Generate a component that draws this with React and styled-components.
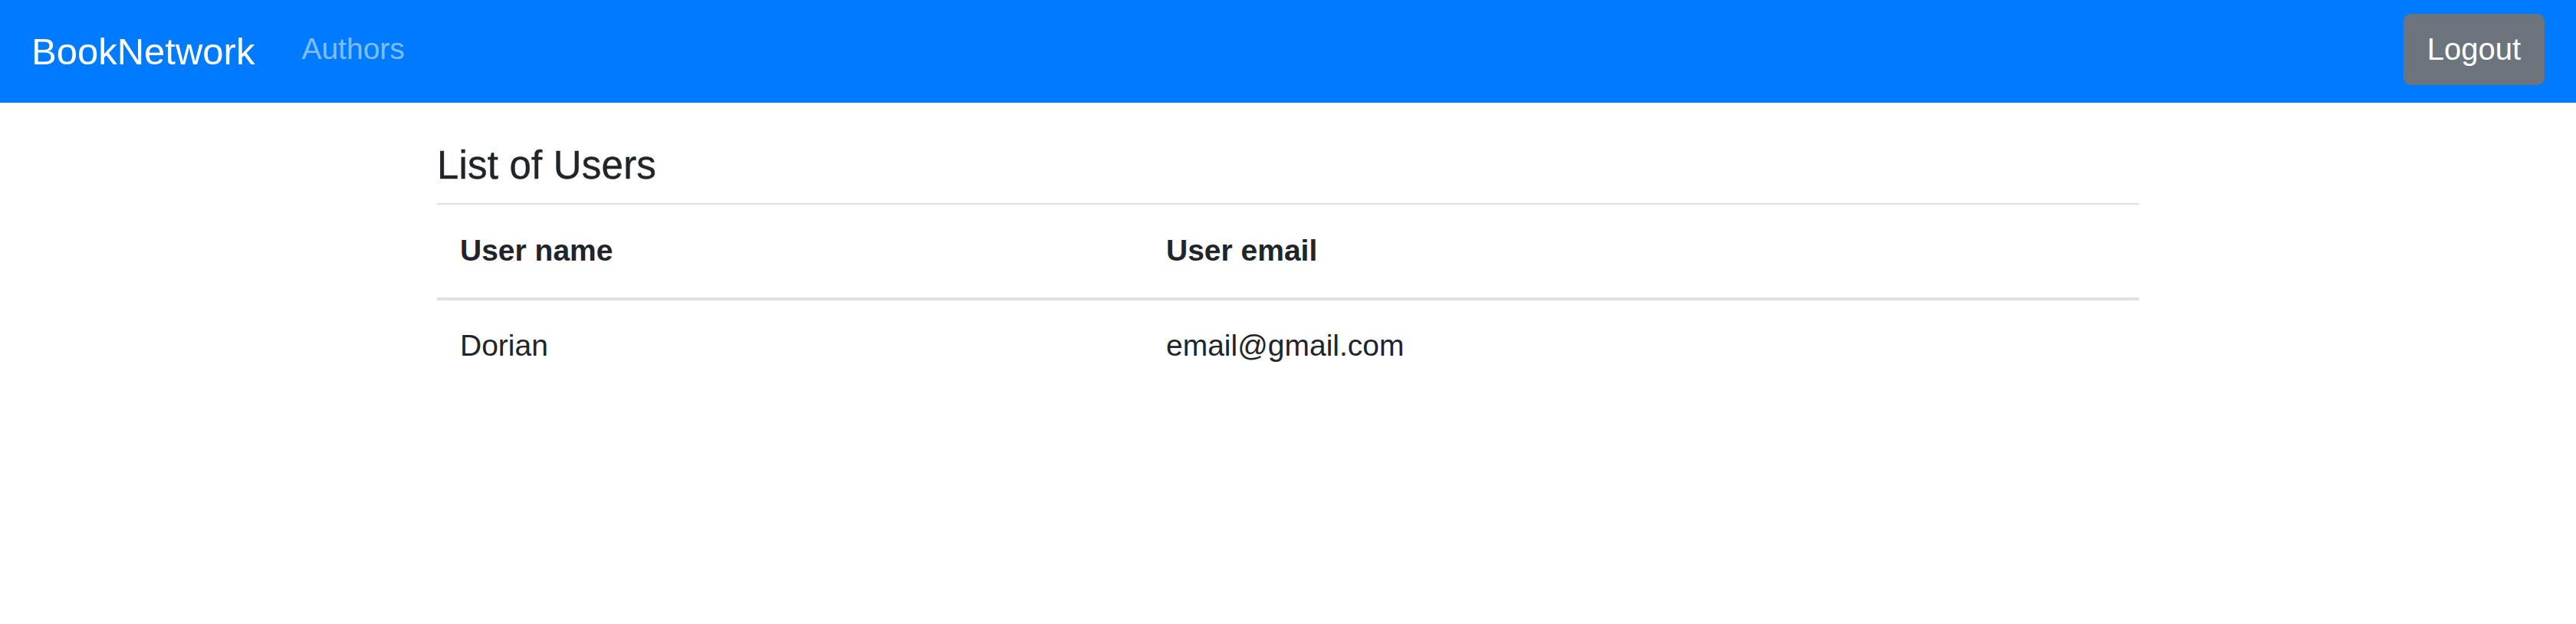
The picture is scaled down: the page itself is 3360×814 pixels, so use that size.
import React from "react"
import styled, { createGlobalStyle } from "styled-components"

const GlobalStyle = createGlobalStyle`
  html, body {
    margin: 0;
    padding: 0;
    background: #fff;
  }

  body {
    font-family: "Liberation Sans", Arial, sans-serif;
    color: #212529;
  }
`

const Navbar = styled.nav`
  display: flex;
  align-items: center;
  height: 134px;
  padding: 0 41px 0 41px;
  background: #007bff;
  box-sizing: border-box;
`

const Brand = styled.a`
  font-size: 49px;
  line-height: 1.2;
  color: #fff;
  text-decoration: none;
  margin-right: 61px;
`

const NavItem = styled.a`
  font-size: 39px;
  line-height: 1.2;
  color: rgba(255, 255, 255, 0.5);
  text-decoration: none;
  margin-bottom: 6px;
`

const Spacer = styled.div`
  flex: 1;
`

const LogoutButton = styled.button`
  height: 93px;
  padding: 0 31px;
  margin-bottom: 5px;
  border: none;
  border-radius: 10px;
  background: #6c757d;
  color: #fff;
  font-family: inherit;
  font-size: 40px;
  cursor: pointer;
`

const Container = styled.main`
  width: 2220px;
  margin: 51px auto 0;
`

const Title = styled.h4`
  margin: 0 0 19px;
  font-size: 51px;
  font-weight: 500;
  line-height: 1.2;
  letter-spacing: 0.2px;
  -webkit-text-stroke: 0.4px #212529;
`

const Table = styled.table`
  width: 100%;
  border-collapse: collapse;
  font-size: 39px;
  line-height: 1.5;
`

const HeadCell = styled.th`
  width: ${props => props.width || "auto"};
  padding: 31px 30px;
  text-align: left;
  font-weight: 700;
  border-top: 2px solid #dee2e6;
  border-bottom: 4px solid #dee2e6;
`

const Cell = styled.td`
  padding: 30px 30px;
`

const users = [{ name: "Dorian", email: "email@gmail.com" }]

const App = () => (
  <>
    <GlobalStyle />
    <Navbar>
      <Brand href="#">BookNetwork</Brand>
      <NavItem href="#">Authors</NavItem>
      <Spacer />
      <LogoutButton>Logout</LogoutButton>
    </Navbar>
    <Container>
      <Title>List of Users</Title>
      <Table>
        <thead>
          <tr>
            <HeadCell width="861px">User name</HeadCell>
            <HeadCell>User email</HeadCell>
          </tr>
        </thead>
        <tbody>
          {users.map(user => (
            <tr key={user.email}>
              <Cell>{user.name}</Cell>
              <Cell>{user.email}</Cell>
            </tr>
          ))}
        </tbody>
      </Table>
    </Container>
  </>
)

export default App
